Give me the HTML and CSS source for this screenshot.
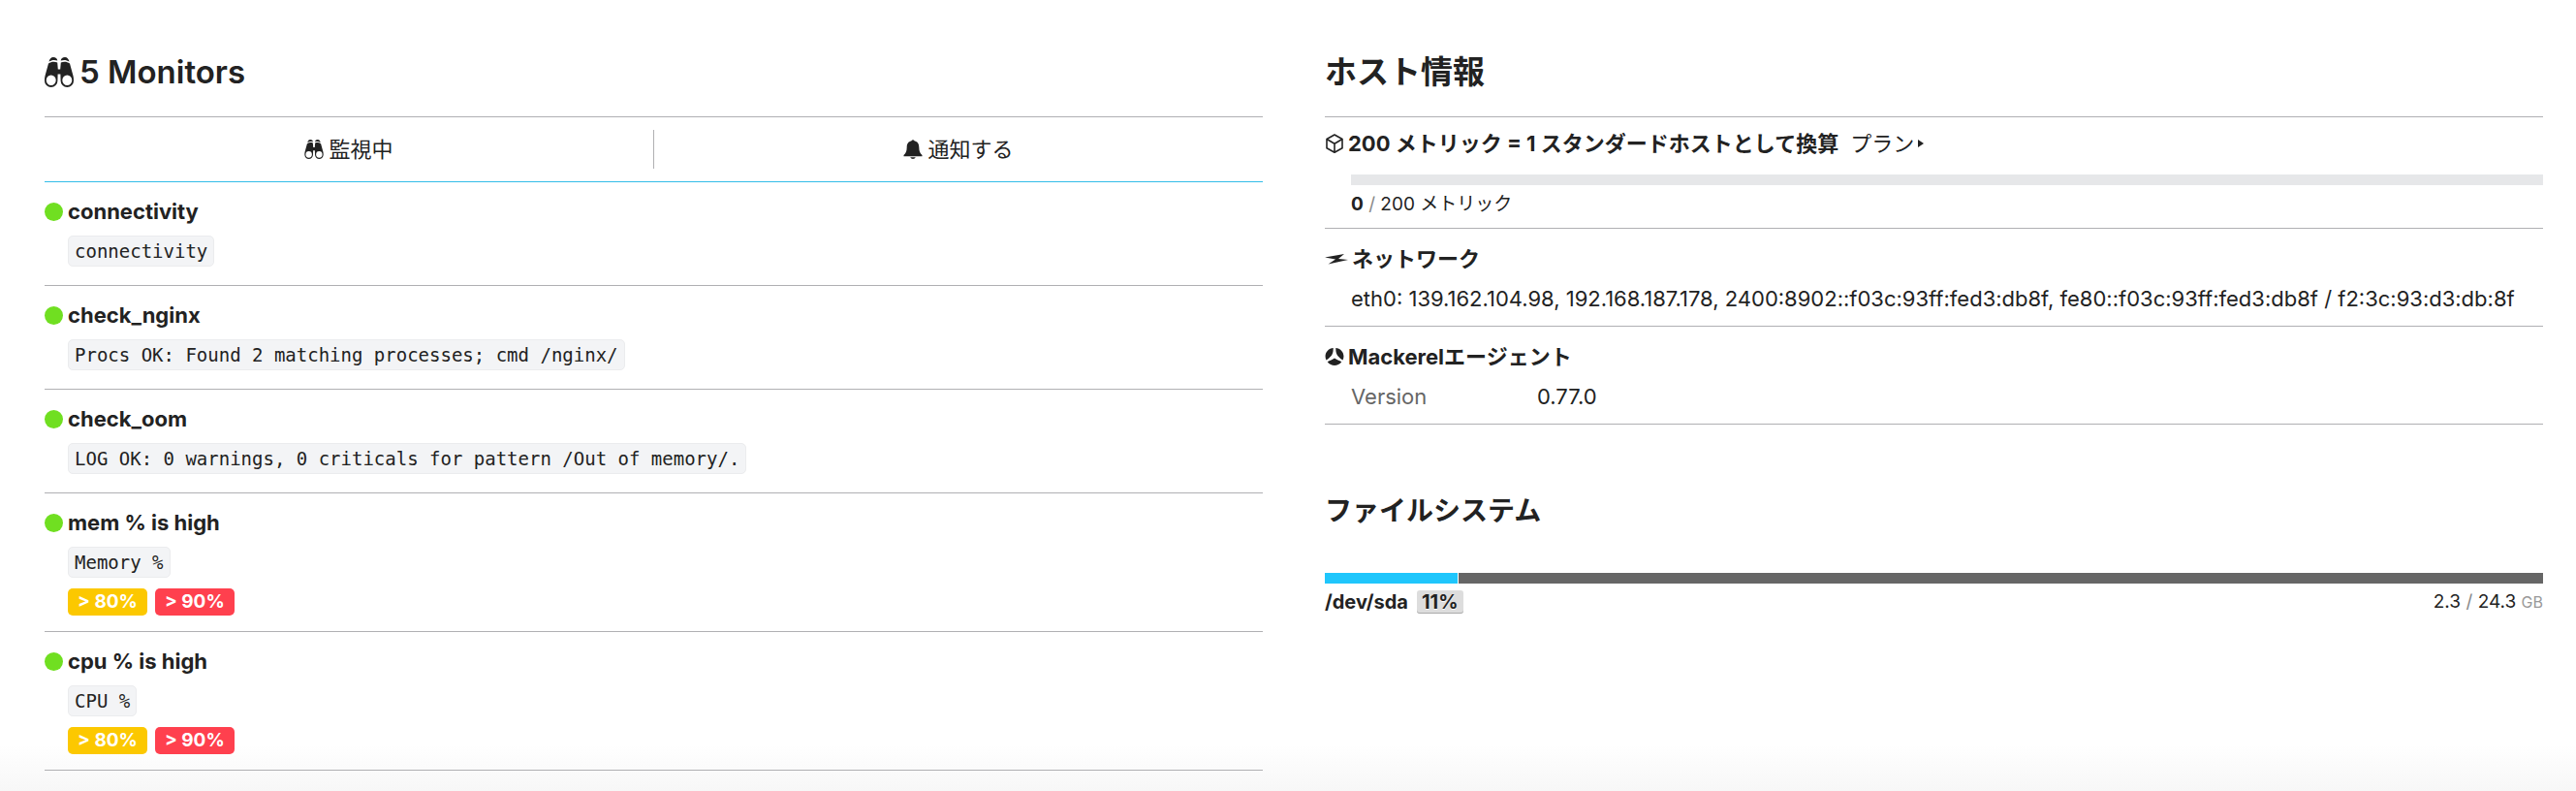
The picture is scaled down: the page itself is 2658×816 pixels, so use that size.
FILE: index.html
```html
<!DOCTYPE html>
<html lang="ja">
<head>
  <meta charset="UTF-8">
  <title>ホスト情報</title>
  <meta name="viewport" content="width=device-width, initial-scale=1.0">
  <link rel="stylesheet" href="styles.css">
</head>

<body>
  <svg class="sprite" aria-hidden="true">
    <symbol id="binoculars" viewBox="0 0 30 31">
      <path d="M4.500 4.500C5.500 1.500 6.500 0 9 0c2.500 0 4 1.200 4.300 3.500C10 2.500 7 3 4.500 4.500zM25.500 4.500C24.500 1.500 23.500 0 21 0c-2.500 0-4 1.200-4.300 3.500C20 2.500 23 3 25.500 4.500z"/>
      <path fill-rule="evenodd" d="M4 6.500C7 4.500 10 4.300 13.200 5.500L13.800 12.500h2.400L16.800 5.500C20 4.300 23 4.500 26 6.500L29.300 18.500C30 21 30 22.500 30 24.500A6.700 6.500 0 0 1 16.600 24.500L16.400 17.500h-2.800L13.400 24.500A6.700 6.500 0 0 1 0 24.500C0 22.500 0 21 .7 18.500zM6.700 18.500a5 5.200 0 1 0 0 10.400a5 5.200 0 1 0 0-10.400zM23.300 18.500a5 5.200 0 1 0 0 10.400a5 5.200 0 1 0 0-10.400z"/>
    </symbol>
  </svg>

  <main class="page">
    <section class="column">
      <h2 class="heading"><svg class="icon-heading"><use href="#binoculars"/></svg>5 Monitors</h2>
      <div class="tabs">
        <button class="tab" type="button"><svg class="icon-tab"><use href="#binoculars"/></svg>監視中</button>
        <button class="tab" type="button">
          <svg class="icon-tab" viewBox="0 0 20 20"><path d="M8.500 1.200Q10-.6 11.500 1.200C15 2 16.200 4.500 16.300 8c.1 4 .9 6 3.200 8v1.200H.5V16c2.300-2 3.100-4 3.200-8C3.800 4.500 5 2 8.500 1.200zM7.200 18.200h5.600Q12 20 10 20T7.200 18.200z"/></svg>通知する
        </button>
      </div>
      <ul class="monitors">
        <li class="monitor">
          <h3 class="monitor-name"><span class="status"></span>connectivity</h3>
          <code class="message">connectivity</code>
        </li>
        <li class="monitor">
          <h3 class="monitor-name"><span class="status"></span>check_nginx</h3>
          <code class="message">Procs OK: Found 2 matching processes; cmd /nginx/</code>
        </li>
        <li class="monitor">
          <h3 class="monitor-name"><span class="status"></span>check_oom</h3>
          <code class="message">LOG OK: 0 warnings, 0 criticals for pattern /Out of memory/.</code>
        </li>
        <li class="monitor">
          <h3 class="monitor-name"><span class="status"></span>mem % is high</h3>
          <code class="message">Memory %</code>
          <div class="thresholds">
            <span class="threshold warning">&gt; 80%</span>
            <span class="threshold critical">&gt; 90%</span>
          </div>
        </li>
        <li class="monitor">
          <h3 class="monitor-name"><span class="status"></span>cpu % is high</h3>
          <code class="message">CPU %</code>
          <div class="thresholds">
            <span class="threshold warning">&gt; 80%</span>
            <span class="threshold critical">&gt; 90%</span>
          </div>
        </li>
      </ul>
    </section>

    <section class="column">
      <h2 class="heading">ホスト情報</h2>
      <div class="info info-metrics">
        <h3 class="info-title">
          <svg class="icon-info" viewBox="0 0 20 20"><path class="line" d="M10 1l8 4.500v9.200L10 19.200l-8-4.500V5.500zM2 5.500l8 4.700 8-4.700M10 10.200v9"/></svg>200 メトリック = 1 スタンダードホストとして換算
          <a class="plan" href="#">プラン<svg class="caret" viewBox="0 0 6 8"><path d="M0 0l6 4-6 4z"/></svg></a>
        </h3>
        <div class="meter"></div>
        <p class="metric-count"><b>0</b> <span class="slash">/</span> 200 メトリック</p>
      </div>
      <div class="info">
        <h3 class="info-title">
          <svg class="icon-info icon-network" viewBox="0 0 24 20"><path d="M0 8.500L20 5l-6 5 10 1L3.500 15.500 11 10.500z"/></svg>ネットワーク
        </h3>
        <p class="info-body">eth0: 139.162.104.98, 192.168.187.178, 2400:8902::f03c:93ff:fed3:db8f, fe80::f03c:93ff:fed3:db8f / f2:3c:93:d3:db:8f</p>
      </div>
      <div class="info">
        <h3 class="info-title">
          <svg class="icon-info" viewBox="0 0 20 20"><path d="M8.700 1c0 5-.5 8-7.200 12.500C-1.500 7.500 3 1.300 8.700 1zM11.300 1c0 5 .5 8 7.200 12.500C21.500 7.500 17 1.300 11.300 1zM10 11.500c2 1.500 5 2.500 7.300 3.700-3.800 5-10.800 5-14.600 0C5 14 8 13 10 11.500z"/></svg>Mackerelエージェント
        </h3>
        <dl class="info-body version">
          <dt>Version</dt>
          <dd>0.77.0</dd>
        </dl>
      </div>

      <h2 class="subheading">ファイルシステム</h2>
      <div class="disk-bar"><div class="disk-used" style="width: 11%"></div></div>
      <div class="disk">
        <span class="disk-name">/dev/sda</span>
        <span class="disk-percent">11%</span>
        <span class="disk-size">2.3 <span class="slash">/</span> 24.3 <small>GB</small></span>
      </div>
    </section>
  </main>
</body>
</html>
```
FILE: styles.css
```css
* {
  box-sizing: border-box;
}

body {
  margin: 0;
  min-height: 100vh;
  font-family: Inter, "Noto Sans CJK JP", sans-serif;
  font-size: 22px;
  line-height: 32px;
  color: #222;
  background: linear-gradient(#fff, #f7f7f7) bottom / 100% 48px no-repeat #fff;
}

h2, h3, p, ul, dl, dd {
  margin: 0;
  padding: 0;
}

svg {
  fill: currentColor;
  flex: none;
}

.sprite {
  position: absolute;
  width: 0;
  height: 0;
}

.page {
  display: grid;
  grid-template-columns: 1fr 1fr;
  gap: 64px;
  padding: 50px 34px 0 46px;
}

.heading {
  display: flex;
  align-items: center;
  gap: 6px;
  padding-bottom: 22px;
  font-size: 33px;
  line-height: 48px;
  font-weight: 600;
  border-bottom: 1px solid #b0b0b3;
}

.icon-heading {
  width: 30px;
  height: 31px;
}

/* tabs */
.tabs {
  display: flex;
  align-items: center;
  height: 67px;
  border-bottom: 1px solid #33bde8;
}

.tab {
  flex: 1;
  display: flex;
  align-items: center;
  justify-content: center;
  gap: 5px;
  height: 40px;
  padding: 0;
  border: 0;
  background: none;
  font: inherit;
  color: inherit;
}

.tab + .tab {
  border-left: 1px solid #b0b0b3;
}

.icon-tab {
  width: 20px;
  height: 20px;
}

/* monitors */
.monitors {
  list-style: none;
}

.monitor {
  padding: 14px 0 16px 24px;
  border-bottom: 1px solid #b0b0b3;
}

.monitor-name {
  display: flex;
  align-items: center;
  gap: 5px;
  margin-left: -24px;
  font-size: 22px;
  font-weight: 700;
}

.status {
  width: 19px;
  height: 19px;
  border-radius: 50%;
  background: #70df21;
}

.message {
  display: block;
  width: fit-content;
  margin: 9px 0 3px;
  padding: 0 6px;
  border: 1px solid #ebecee;
  border-radius: 5px;
  background: #f3f4f6;
  font-family: "DejaVu Sans Mono", monospace;
  font-size: 19px;
  line-height: 30px;
}

.thresholds {
  display: flex;
  gap: 8px;
  margin-top: 11px;
}

.threshold {
  padding: 0 10px;
  border-radius: 5px;
  font-size: 19px;
  line-height: 28px;
  font-weight: 700;
  color: #fff;
}

.warning {
  background: #fcc800;
}

.critical {
  background: #ff404e;
}

/* host info */
.info {
  padding: 15px 0 12px;
  border-bottom: 1px solid #b0b0b3;
}

.info-metrics {
  padding: 11px 0 10px;
}

.info-title {
  display: flex;
  align-items: center;
  gap: 4px;
  font-size: 22px;
  font-weight: 700;
}

.icon-info {
  width: 20px;
  height: 20px;
}

.icon-network {
  width: 24px;
}

.line {
  fill: none;
  stroke: currentColor;
  stroke-width: 1.6;
  stroke-linejoin: round;
}

.plan {
  display: flex;
  align-items: center;
  gap: 4px;
  margin-left: 8px;
  font-weight: 400;
  color: inherit;
  text-decoration: none;
}

.caret {
  width: 6px;
  height: 8px;
}

.meter {
  height: 11px;
  margin: 16px 0 6px 27px;
  background: #e6e7e9;
}

.metric-count {
  margin-left: 27px;
  font-size: 19px;
  line-height: 28px;
}

.slash {
  color: #888;
}

.info-body {
  margin: 9px 0 0 27px;
}

.version {
  display: flex;
}

.version dt {
  width: 192px;
  color: #666;
}

/* file system */
.subheading {
  margin: 69px 0 44px;
  font-size: 28px;
  line-height: 40px;
  font-weight: 600;
}

.disk-bar {
  height: 11px;
  background: #666;
}

.disk-used {
  height: 11px;
  background: #1fc6fc;
  border-right: 1px solid #fff;
}

.disk {
  display: flex;
  align-items: center;
  gap: 9px;
  margin-top: 3px;
}

.disk-name,
.disk-percent {
  font-size: 20px;
  font-weight: 700;
}

.disk-percent {
  padding: 0 5px;
  border-radius: 3px;
  background: #ddd;
  box-shadow: inset 0 -1px #aaa;
  line-height: 24px;
  text-shadow: 0 1px #fff;
}

.disk-size {
  margin-left: auto;
  font-size: 19px;
}

.disk-size small {
  font-size: 16px;
  color: #999;
}
```
